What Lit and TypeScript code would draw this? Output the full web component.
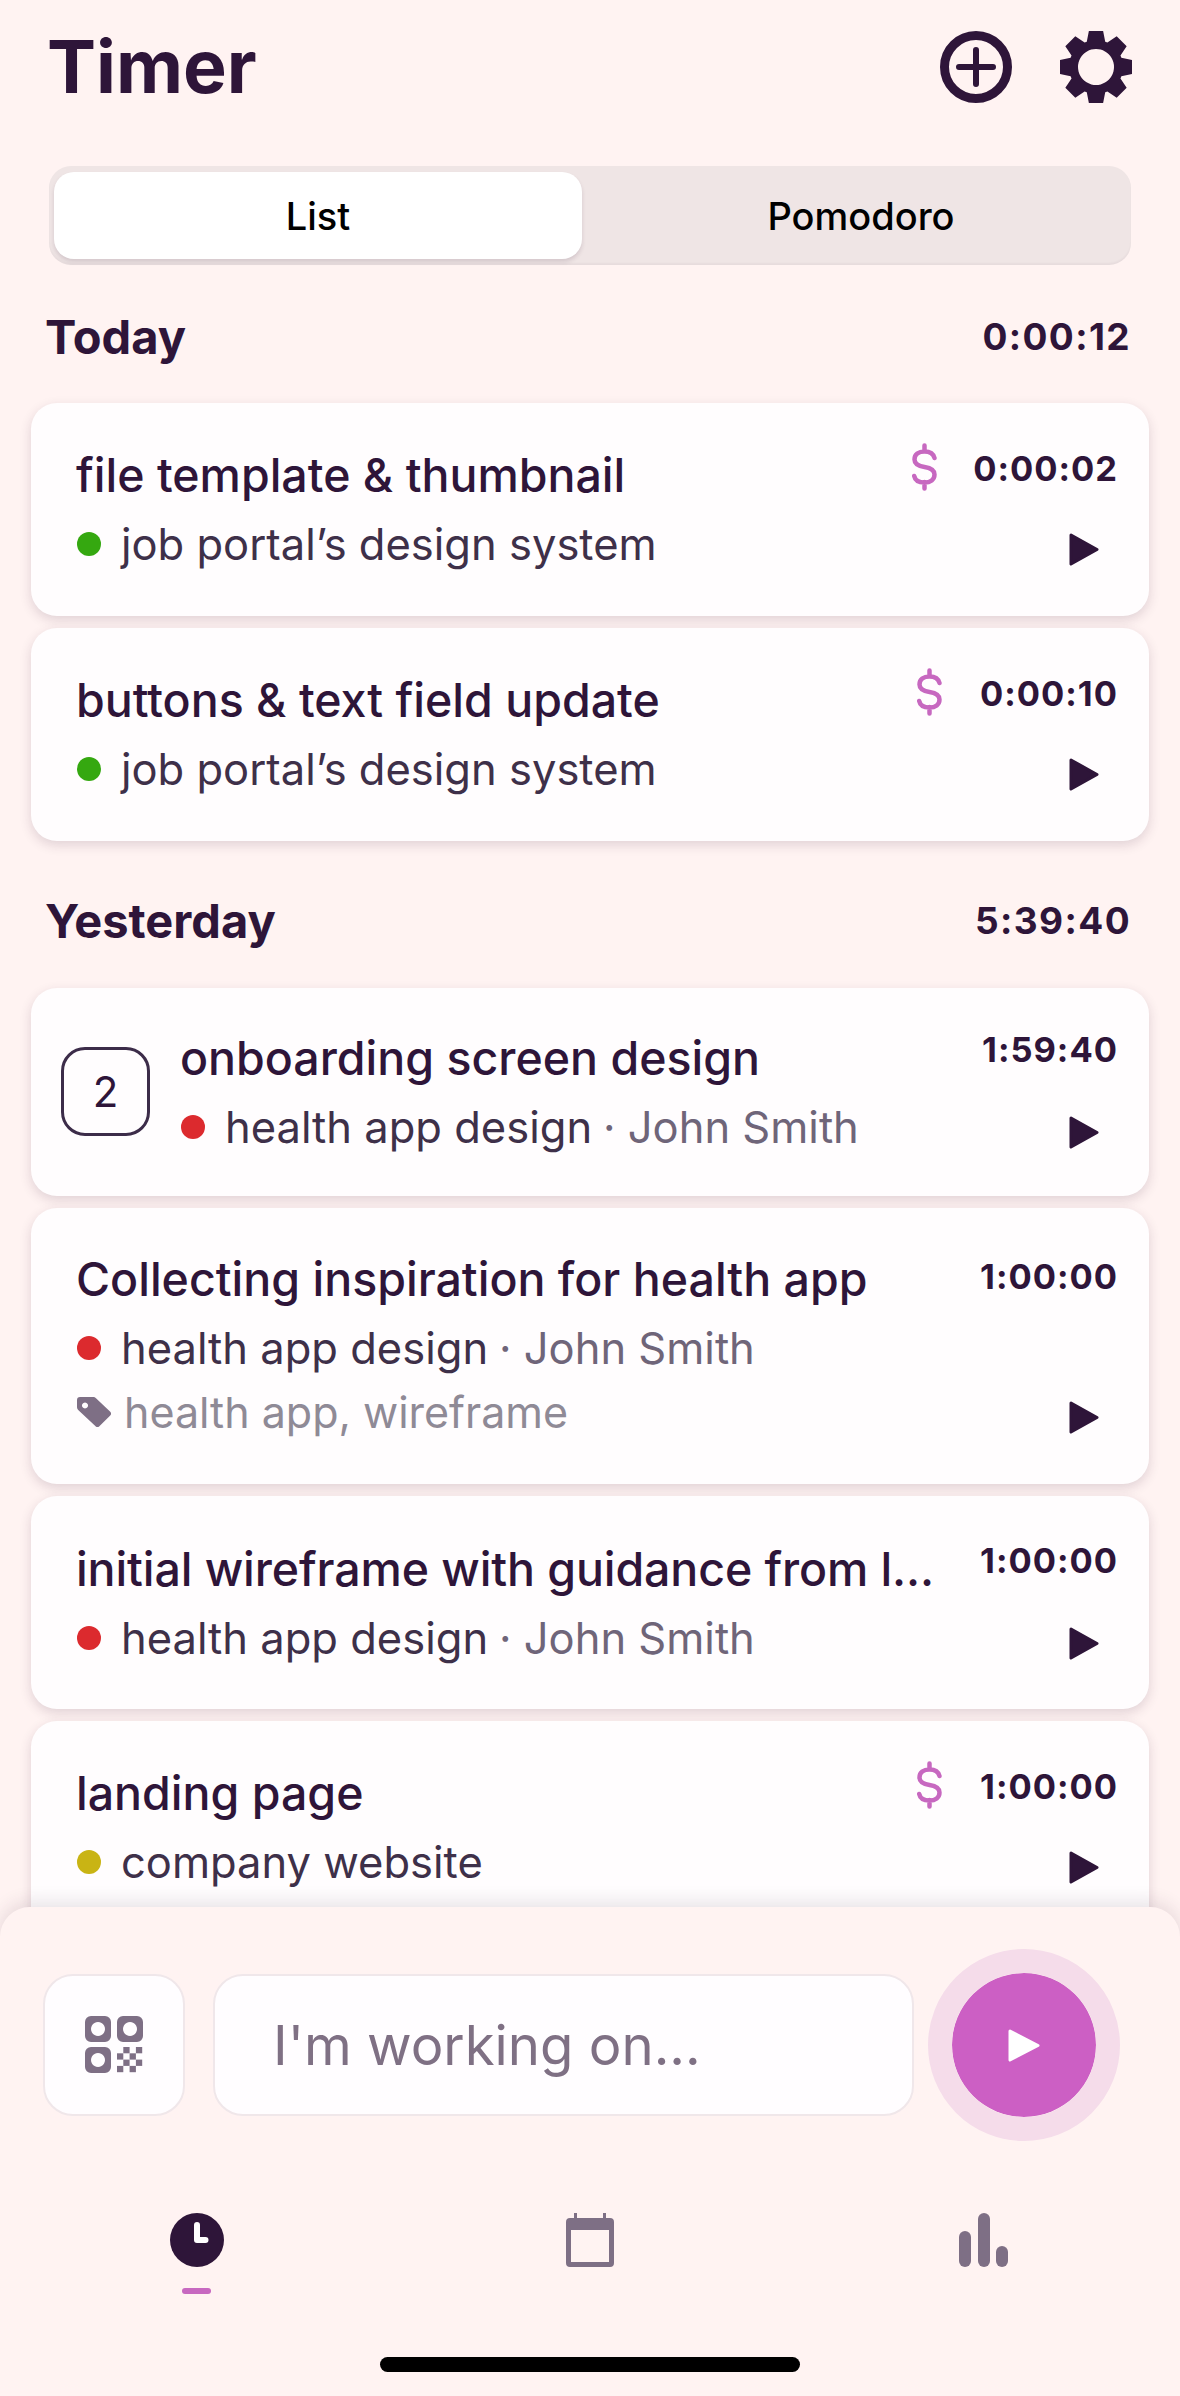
import { LitElement, html, svg, css, nothing } from 'lit';
import { customElement } from 'lit/decorators.js';
import { classMap } from 'lit/directives/class-map.js';

interface Entry {
  title: string;
  project: string;
  dot: string;
  client?: string;
  tags?: string;
  billable?: boolean;
  time: string;
  count?: number;
  size?: 'compact' | 'mid' | 'tagged';
}

const GREEN = '#35a810';
const RED = '#dc2a2e';
const YELLOW = '#c9b414';

const today: Entry[] = [
  { title: 'file template & thumbnail', project: 'job portal’s design system', dot: GREEN, billable: true, time: '0:00:02' },
  { title: 'buttons & text field update', project: 'job portal’s design system', dot: GREEN, billable: true, time: '0:00:10' },
];

const yesterday: Entry[] = [
  { title: 'onboarding screen design', project: 'health app design', client: 'John Smith', dot: RED, time: '1:59:40', count: 2, size: 'compact' },
  { title: 'Collecting inspiration for health app', project: 'health app design', client: 'John Smith', dot: RED, tags: 'health app, wireframe', time: '1:00:00', size: 'tagged' },
  { title: 'initial wireframe with guidance from l...', project: 'health app design', client: 'John Smith', dot: RED, time: '1:00:00', size: 'mid' },
  { title: 'landing page', project: 'company website', dot: YELLOW, billable: true, time: '1:00:00' },
];

// eight toothed gear, outer radius 36 around 36,36
function gearPath() {
  const pts: string[] = [];
  const pt = (r: number, deg: number) => {
    const a = (deg * Math.PI) / 180;
    return `${(36 + r * Math.sin(a)).toFixed(2)} ${(36 - r * Math.cos(a)).toFixed(2)}`;
  };
  for (let i = 0; i < 8; i++) {
    const c = i * 45;
    pts.push(pt(27, c - 20), pt(37, c - 11), pt(37, c + 11), pt(27, c + 20));
  }
  return `M${pts.join('L')}Z M36 18a18 18 0 1 0 .01 0Z`;
}

const dollarIcon = html`<svg class="dollar" viewBox="0 0 25 48" fill="none" stroke="#c768c0" stroke-width="4.5" stroke-linecap="round">
  <path d="M12.5 2.5v6M12.5 39v6.5M22.5 15C21.5 11 18 8.5 12.5 8.5 6.5 8.5 2.5 11.5 2.5 16.5 2.5 21 6 23 12.5 24 19 25 22.5 27 22.5 31.5 22.5 36.5 18.5 39.5 12.5 39.5 6.5 39.5 3 37 2.2 33"/>
</svg>`;

const playIcon = html`<svg class="play" viewBox="0 0 30 33"><path d="M2 2 L28 16.5 L2 31Z" fill="#2e1539" stroke="#2e1539" stroke-width="3" stroke-linejoin="round"/></svg>`;

const tagIcon = html`<svg class="tag" viewBox="0 0 34 30"><path fill="#7e6f85" d="M0 3a3 3 0 0 1 3-3h13a4 4 0 0 1 3 1.2l14 13.3a3 3 0 0 1 0 4.3L22.6 29a3 3 0 0 1-4.3 0L1.2 13A4 4 0 0 1 0 10ZM8 5.5a3 3 0 1 0 .01 0Z" fill-rule="evenodd"/></svg>`;

function qrTile(x: number, y: number) {
  return svg`<path fill-rule="evenodd" d="M${x + 6} ${y}h14a6 6 0 0 1 6 6v14a6 6 0 0 1-6 6h-14a6 6 0 0 1-6-6v-14a6 6 0 0 1 6-6ZM${x + 13} ${y + 6}a7 7 0 1 0 .01 0Z"/>`;
}

function qrChecker() {
  const cells = [];
  for (let r = 0; r < 4; r++) {
    for (let c = 0; c < 4; c++) {
      if ((r + c) % 2 === 1) {
        cells.push(svg`<rect x=${32 + c * 6.3} y=${31 + r * 6.3} width="6.3" height="6.3"/>`);
      }
    }
  }
  return cells;
}

@customElement('time-entry')
export class TimeEntry extends LitElement {
  static properties = { entry: { attribute: false } };
  declare entry: Entry;

  static styles = css`
    :host { display: block; }
    .card {
      display: flex;
      background: #fffdfe;
      border-radius: 26px;
      padding: 44px 31px 44px 46px;
      box-shadow: 0 4px 12px rgba(60, 30, 60, 0.16);
    }
    .card.compact { padding: 42px 31px 41px 30px; }
    .card.mid { padding: 45px 31px 43px 46px; }
    .card.tagged { padding: 43px 31px 44px 46px; }
    .count {
      flex: none;
      box-sizing: border-box;
      width: 89px;
      height: 89px;
      margin: 17px 31px 0 0;
      border: 3px solid #3c2c49;
      border-radius: 24px;
      display: flex;
      align-items: center;
      justify-content: center;
      font-size: 42px;
      color: #2e1539;
    }
    .main {
      flex: 1;
      min-width: 0;
      display: flex;
      flex-direction: column;
      gap: 13px;
    }
    .title {
      margin-left: -1px;
      font-size: 46.5px;
      line-height: 56px;
      font-weight: 500;
      color: #2e1539;
      white-space: nowrap;
    }
    .mid .title { letter-spacing: -0.1px; }
    .sub {
      display: flex;
      align-items: center;
      font-size: 43.5px;
      line-height: 56px;
      color: #3e3049;
      white-space: nowrap;
    }
    .dot {
      flex: none;
      width: 24px;
      height: 24px;
      border-radius: 50%;
      margin-right: 20px;
    }
    .client { color: #6f6579; margin-left: 0.25em; }
    .tags { color: #8f8a96; margin-top: -5px; font-size: 43px; }
    .tag { width: 34px; height: 30px; margin-right: 13px; flex: none; }
    .side {
      flex: none;
      display: flex;
      flex-direction: column;
      align-items: flex-end;
      justify-content: space-between;
      margin-left: 20px;
    }
    .top { display: flex; align-items: center; gap: 36px; }
    .tagged .top { margin-top: 6px; }
    .dollar { width: 25px; height: 48px; margin-top: -4px; }
    .time {
      min-width: 140px;
      text-align: right;
      font-size: 34.5px;
      line-height: 40px;
      font-weight: 700;
      color: #2e1539;
      letter-spacing: 1px;
    }
    .play { width: 30px; height: 33px; margin: 0 19px 6px 0; }
  `;

  render() {
    const e = this.entry;
    const cls = { card: true, [e.size ?? 'full']: true };
    return html`<div class=${classMap(cls)}>
      ${e.count ? html`<div class="count">${e.count}</div>` : nothing}
      <div class="main">
        <div class="title">${e.title}</div>
        <div class="sub">
          <span class="dot" style="background:${e.dot}"></span>
          <span>${e.project}</span>
          ${e.client ? html`<span class="client">· ${e.client}</span>` : nothing}
        </div>
        ${e.tags ? html`<div class="sub tags">${tagIcon}<span>${e.tags}</span></div>` : nothing}
      </div>
      <div class="side">
        <div class="top">
          ${e.billable ? dollarIcon : nothing}
          <span class="time">${e.time}</span>
        </div>
        ${playIcon}
      </div>
    </div>`;
  }
}

@customElement('app-root')
export class AppRoot extends LitElement {
  static styles = css`
    :host {
      display: block;
      font-family: Inter, 'Liberation Sans', sans-serif;
      color: #2e1539;
    }
    .page {
      height: 2396px;
      overflow: hidden;
      display: flex;
      flex-direction: column;
      background: #fff3f2;
    }
    .header {
      flex: none;
      height: 72px;
      margin-top: 31px;
      padding: 0 48px 0 47px;
      display: flex;
      align-items: center;
      justify-content: space-between;
    }
    h1 { margin: 0; font-size: 73.5px; line-height: 72px; font-weight: 700; }
    .actions { display: flex; gap: 48px; }
    .actions svg { width: 72px; height: 72px; display: block; }
    .segments {
      flex: none;
      box-sizing: border-box;
      height: 99px;
      margin: 63px 49px 0;
      padding: 6px 5px;
      display: grid;
      grid-template-columns: 528px 1fr;
      background: #efe5e5;
      border-radius: 22px;
      font-size: 38px;
      font-weight: 500;
      color: #000;
      box-shadow: inset 0 -2px 2px rgba(60, 30, 60, 0.04);
    }
    .segments div { display: flex; align-items: center; justify-content: center; }
    .segments .on {
      background: #fff;
      border-radius: 20px;
      box-shadow: 0 3px 4px rgba(60, 30, 60, 0.14);
    }
    .segments .off { padding-left: 14px; }
    .list { flex: 1; min-height: 0; overflow: hidden; padding: 0 31px; }
    .day {
      display: flex;
      align-items: center;
      justify-content: space-between;
      height: 56px;
      padding: 0 18px 0 15px;
      margin: 43px 0 39px;
    }
    .yesterday { margin: 0 0 40px; }
    .day strong { font-size: 47px; font-weight: 700; margin-left: -1px; }
    .day span { font-size: 37px; font-weight: 700; letter-spacing: 1.4px; }
    .group { display: flex; flex-direction: column; gap: 12px; margin-bottom: 51px; }
    .panel {
      flex: none;
      position: relative;
      height: 489px;
      box-sizing: border-box;
      padding-top: 42px;
      background: #fff3f2;
      border-radius: 30px 30px 0 0;
      box-shadow: 0 -5px 18px rgba(60, 30, 60, 0.12);
      display: flex;
      flex-direction: column;
    }
    .composer { display: flex; align-items: center; padding: 0 60px 0 43px; }
    .qr, .field {
      box-sizing: border-box;
      height: 142px;
      border: 2px solid #f0e7ea;
      border-radius: 30px;
      background: #fffdff;
    }
    .qr {
      flex: none;
      width: 142px;
      margin-right: 28px;
      display: flex;
      align-items: center;
      justify-content: center;
    }
    .qr svg { width: 58px; height: 58px; fill: #7e6f85; }
    .field {
      flex: 1;
      min-width: 0;
      margin-right: 14px;
      padding-left: 58px;
      display: flex;
      align-items: center;
      font-size: 54.5px;
      color: #7f7084;
    }
    .start {
      flex: none;
      box-sizing: border-box;
      width: 192px;
      height: 192px;
      border-radius: 50%;
      border: 24px solid #f5dcea;
      background: #cc5fc4;
      background-clip: padding-box;
      display: flex;
      align-items: center;
      justify-content: center;
    }
    .start svg { width: 32px; height: 33px; }
    nav {
      display: grid;
      grid-template-columns: repeat(3, 1fr);
      margin-top: 72px;
    }
    nav div { display: flex; flex-direction: column; align-items: center; }
    nav svg { height: 54px; display: block; }
    .marker {
      width: 29px;
      height: 6px;
      margin-top: 21px;
      border-radius: 3px;
      background: #c768c0;
    }
    .home {
      width: 420px;
      height: 15px;
      margin: 63px auto 0;
      border-radius: 8px;
      background: #000;
    }
  `;

  render() {
    return html`<div class="page">
      <header class="header">
        <h1>Timer</h1>
        <div class="actions">
          <svg viewBox="0 0 72 72" fill="none" stroke="#2e1539" stroke-linecap="round">
            <circle cx="36" cy="36" r="31.5" stroke-width="9"/>
            <path d="M19 36h34M36 19v34" stroke-width="6"/>
          </svg>
          <svg viewBox="0 0 72 72"><path fill="#2e1539" fill-rule="evenodd" d=${gearPath()}/></svg>
        </div>
      </header>
      <div class="segments">
        <div class="on">List</div>
        <div class="off">Pomodoro</div>
      </div>
      <main class="list">
        <div class="day"><strong>Today</strong><span>0:00:12</span></div>
        <div class="group">${today.map((e) => html`<time-entry .entry=${e}></time-entry>`)}</div>
        <div class="day yesterday"><strong>Yesterday</strong><span>5:39:40</span></div>
        <div class="group">${yesterday.map((e) => html`<time-entry .entry=${e}></time-entry>`)}</div>
      </main>
      <section class="panel">
        <div class="composer">
          <div class="qr">
            <svg viewBox="0 0 58 58">${qrTile(0, 0)}${qrTile(32, 0)}${qrTile(0, 31)}${qrChecker()}</svg>
          </div>
          <div class="field">I'm working on...</div>
          <div class="start">
            <svg viewBox="0 0 32 33"><path d="M2 2 L30 16.5 L2 31Z" fill="#fff" stroke="#fff" stroke-width="3" stroke-linejoin="round"/></svg>
          </div>
        </div>
        <nav>
          <div>
            <svg viewBox="0 0 54 54" width="54">
              <circle cx="27" cy="27" r="27" fill="#2e1539"/>
              <path d="M27 12v15h8.5" fill="none" stroke="#fff" stroke-width="6" stroke-linecap="round" stroke-linejoin="round"/>
            </svg>
            <span class="marker"></span>
          </div>
          <div>
            <svg viewBox="0 0 48 54" width="48">
              <path fill="#7e6f85" fill-rule="evenodd" d="M8 0h3v5h26V0h3v5h4a4 4 0 0 1 4 4v41a4 4 0 0 1-4 4H4a4 4 0 0 1-4-4V9a4 4 0 0 1 4-4h4ZM5 17v32h38V17Z"/>
            </svg>
          </div>
          <div>
            <svg viewBox="0 0 49 54" width="49" fill="#7e6f85">
              <rect x="0" y="18" width="12" height="36" rx="6"/>
              <rect x="19" y="0" width="12" height="54" rx="6"/>
              <rect x="37" y="33" width="12" height="21" rx="6"/>
            </svg>
          </div>
        </nav>
        <div class="home"></div>
      </section>
    </div>`;
  }
}
